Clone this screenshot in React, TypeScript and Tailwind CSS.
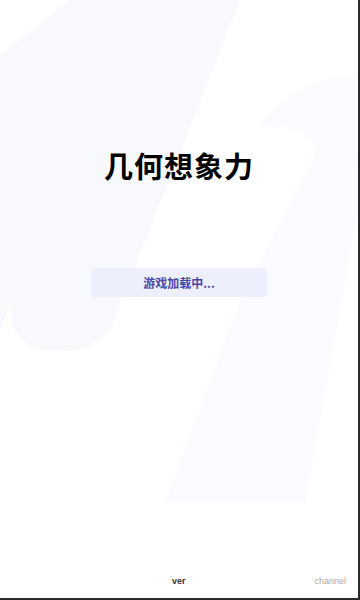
export default function App() {
  return (
    <div className="relative h-[600px] w-[360px] overflow-hidden bg-white border-r-2 border-b-2 border-[#2a2a2a] font-['Noto_Sans_CJK_SC',sans-serif]">
      {/* faint brush strokes in the background */}
      <svg
        className="absolute inset-0"
        width="360"
        height="600"
        viewBox="0 0 360 600"
        fill="none"
      >
        <path
          d="M0 55 L70 0 L240 0 L110 330 C95 350 60 356 35 348 C15 340 8 320 12 300 L0 330 Z"
          fill="#f8f9fd"
        />
        <path
          d="M258 128 C280 95 325 72 356 76 L358 210 L305 503 L165 503 L240 300 L318 150 C310 132 285 122 258 128 Z"
          fill="#fafbfe"
        />
      </svg>

      <div className="relative flex h-full flex-col items-center">
        <h1 className="mt-[146px] text-[29px] leading-[38px] font-bold tracking-[1px] text-black">
          几何想象力
        </h1>
        <div className="mt-[84px] flex h-[29px] w-[176px] items-center justify-center rounded-[4px] bg-[#edf0fc] text-[12px] font-semibold text-[#4a48a6]">
          游戏加载中...
        </div>
        <div className="mt-auto mb-[10px] flex w-full items-center">
          <span className="ml-[172px] text-[9px] font-bold text-[#333] font-['Liberation_Sans',sans-serif]">
            ver
          </span>
          <span className="ml-auto mr-[12px] text-[9px] text-[#aaa] font-['Liberation_Sans',sans-serif]">
            channel
          </span>
        </div>
      </div>
    </div>
  );
}
